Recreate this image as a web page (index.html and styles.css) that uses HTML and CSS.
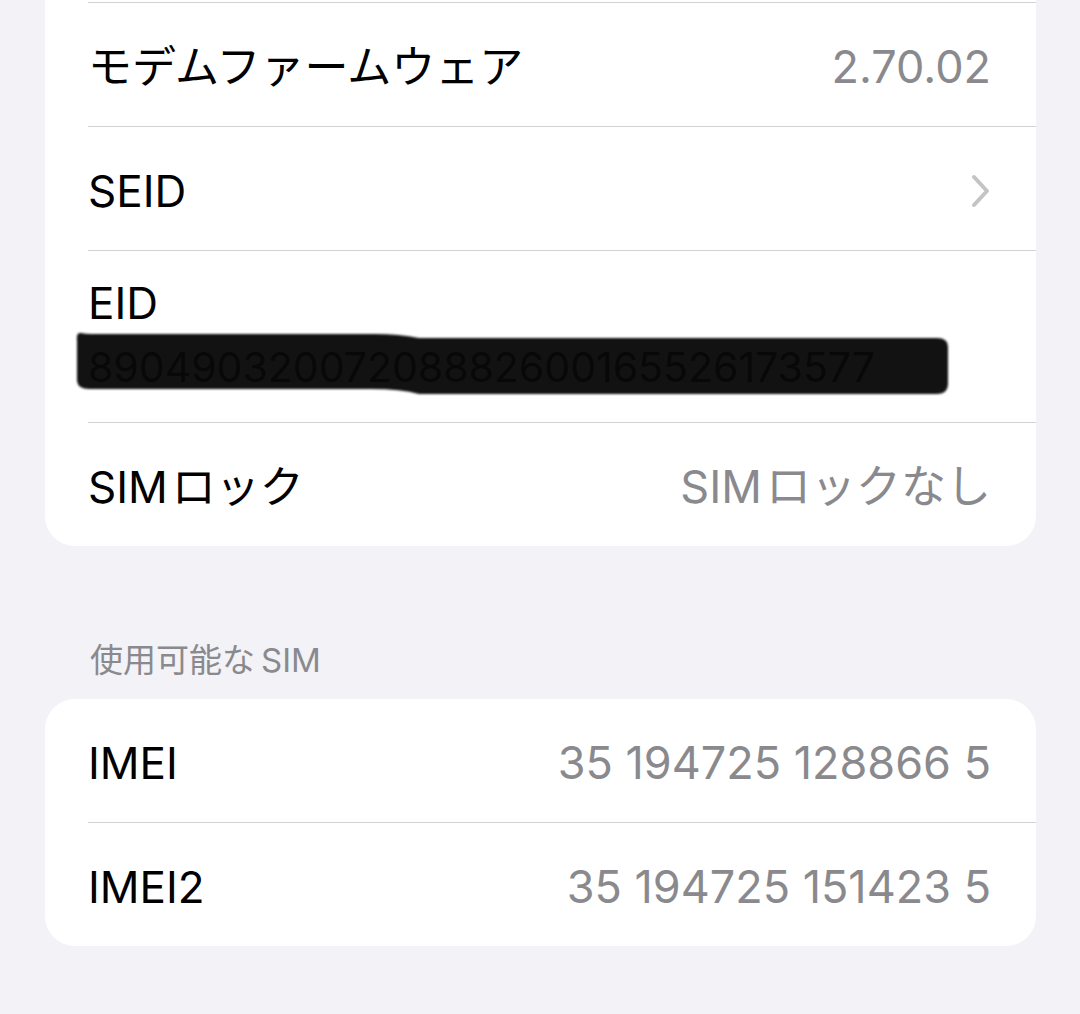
FILE: index.html
```html
<!DOCTYPE html>
<html lang="ja">
<head>
    <meta charset="UTF-8">
    <title>情報</title>
    <link rel="stylesheet" href="styles.css">
</head>
<body>
    <div class="group group-cut">
        <div class="row first">
            <span class="label">モデムファームウェア</span>
            <span class="value">2.70.02</span>
        </div>
        <div class="row">
            <span class="label">SEID</span>
            <svg class="chevron" width="20" height="34" viewBox="0 0 20 34">
                <path d="M3 3 L16 17 L3 31" fill="none" stroke="#c4c4c7" stroke-width="4" stroke-linecap="round" stroke-linejoin="round"/>
            </svg>
        </div>
        <div class="row row-tall">
            <span class="label">EID</span>
            <span class="eid">89049032007208882600165526173577</span>
            <!-- マジックで塗りつぶした部分 -->
            <svg class="redact" width="876" height="66" viewBox="0 0 876 66">
                <path d="M6 2 Q1 1 2 10 L2 50 Q3 58 14 58 L296 58 Q326 58 344 63 L862 63 Q873 63 873 52 L873 16 Q873 7 862 7 L344 7 Q324 3 300 3 L16 3 Q10 3 6 2 Z" fill="#080808" fill-opacity="0.96"/>
            </svg>
        </div>
        <div class="row">
            <span class="label">SIM&#8202;ロック</span>
            <span class="value">SIM&#8202;ロックなし</span>
        </div>
    </div>

    <div class="section-title">使用可能な&#8201;SIM</div>
    <div class="group">
        <div class="row">
            <span class="label">IMEI</span>
            <span class="value">35 194725 128866 5</span>
        </div>
        <div class="row">
            <span class="label">IMEI2</span>
            <span class="value">35 194725 151423 5</span>
        </div>
    </div>
</body>
</html>
```

FILE: styles.css
```css
body {
    margin: 0;
    background-color: #f2f2f7;
    font-family: Inter, "Noto Sans CJK JP", sans-serif;
    color: #000;
    padding: 0 44px 0 45px;
}
.group {
    background-color: #fff;
    border-radius: 30px;
}
.group-cut {
    padding-top: 2px;
    border-radius: 0 0 30px 30px;
}
.row {
    position: relative;
    display: flex;
    align-items: center;
    justify-content: space-between;
    height: 119px;
    padding-top: 4px;
    margin-left: 43px;
    padding-right: 45px;
}
.row + .row, .row.first {
    border-top: 1px solid #d1d1d6;
}
.row-tall {
    height: 172px;
    flex-direction: column;
    align-items: flex-start;
    justify-content: flex-start;
    box-sizing: border-box;
    padding-top: 25px;
}
.label {
    font-size: 44px;
    line-height: 54px;
}
.value {
    font-size: 45px;
    line-height: 54px;
    color: #8a8a8e;
}
.chevron {
    display: block;
}
.eid {
    font-size: 41px;
    line-height: 50px;
    margin-top: 12px;
    white-space: nowrap;
}
.redact {
    position: absolute;
    left: -13px;
    top: 80px;
    filter: blur(1px);
}
.section-title {
    font-size: 33px;
    line-height: 40px;
    color: #8a8a8e;
    margin: 94px 0 19px 45px;
}
```
